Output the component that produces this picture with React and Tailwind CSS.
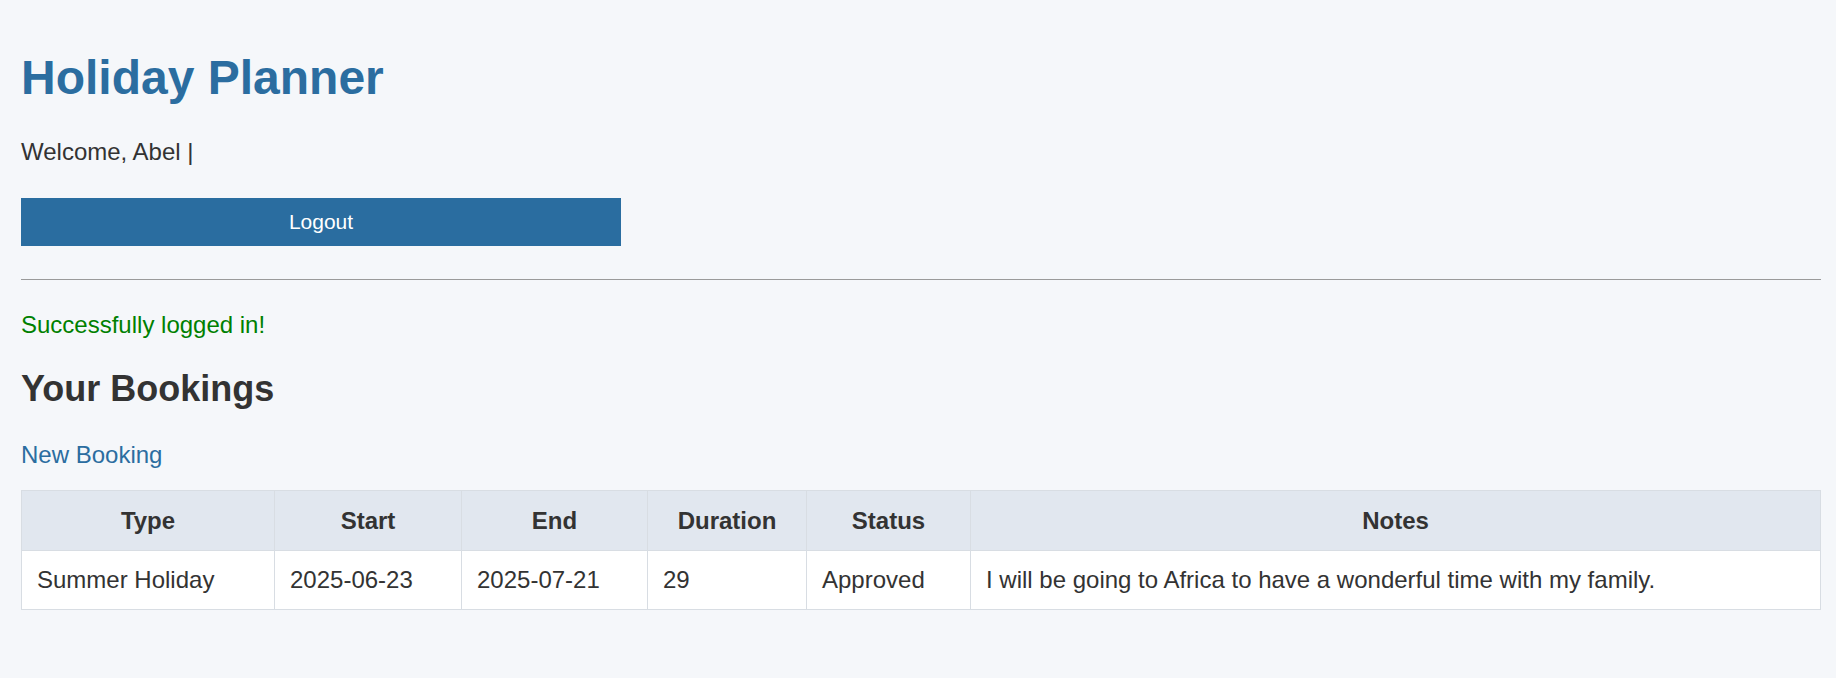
const bookings = [
  {
    id: 1,
    type: 'Summer Holiday',
    start: '2025-06-23',
    end: '2025-07-21',
    duration: 29,
    status: 'Approved',
    notes: 'I will be going to Africa to have a wonderful time with my family.',
  },
]

const columns = [
  { key: 'type', label: 'Type', width: 'w-[253px]' },
  { key: 'start', label: 'Start', width: 'w-[187px]' },
  { key: 'end', label: 'End', width: 'w-[186px]' },
  { key: 'duration', label: 'Duration', width: 'w-[159px]' },
  { key: 'status', label: 'Status', width: 'w-[164px]' },
  { key: 'notes', label: 'Notes', width: '' },
]

export default function App() {
  return (
    <div className="min-h-screen bg-[#f5f7fa] text-[#333] font-['Liberation_Sans',Arial,sans-serif] text-[24px] leading-[27.6px]">
      <div className="pl-[21px] pr-[15px] pt-[50px] pb-10">
        <h1 className="text-[48px] leading-[55px] font-bold text-[#2b6da0]">Holiday Planner</h1>

        <p className="mt-[33px]">Welcome, Abel |</p>

        <button className="mt-[32px] w-[600px] h-[48px] bg-[#2a6da0] text-white text-[21px]">
          Logout
        </button>

        <hr className="mt-[33px] border-0 border-t border-[#9a9a9a]" />

        <p className="mt-[31px] text-[#008000]">Successfully logged in!</p>

        <h2 className="mt-[30px] text-[36px] leading-[41.4px] font-bold">Your Bookings</h2>

        <p className="mt-[31px]">
          <a href="#" className="text-[#2b6da0]">New Booking</a>
        </p>

        <table className="mt-[22px] w-full border-collapse table-fixed">
          <thead>
            <tr className="bg-[#e1e7ef]">
              {columns.map(col => (
                <th
                  key={col.key}
                  className={`${col.width} h-[60px] border border-[#d8dde3] font-bold text-center px-[15px]`}
                >
                  {col.label}
                </th>
              ))}
            </tr>
          </thead>
          <tbody>
            {bookings.map(b => (
              <tr key={b.id} className="bg-white">
                {columns.map(col => (
                  <td
                    key={col.key}
                    className="h-[59px] border border-[#d8dde3] text-left px-[15px]"
                  >
                    {b[col.key]}
                  </td>
                ))}
              </tr>
            ))}
          </tbody>
        </table>
      </div>
    </div>
  )
}
